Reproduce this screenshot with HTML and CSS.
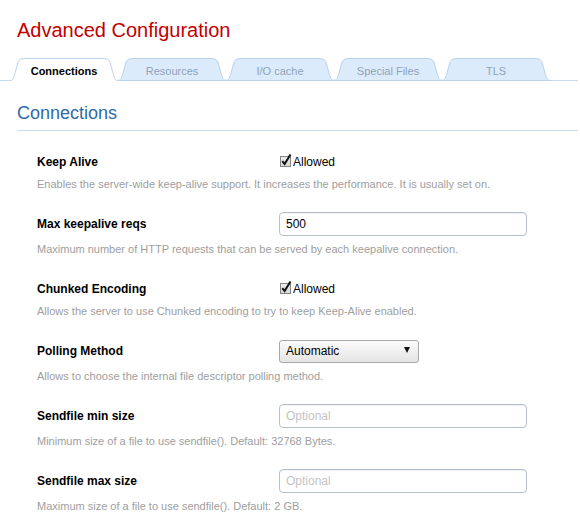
FILE: index.html
```html
<!DOCTYPE html>
<html>
<head>
<meta charset="utf-8">
<link rel="stylesheet" href="styles.css">
</head>
<body>
<h1 class="title">Advanced Configuration</h1>
<div class="tabs">
  <div class="tab active"><svg class="tab-bg" viewBox="0 0 110 23" preserveAspectRatio="none"><path d="M0,23 C4,23 5,19 6,15 L9,4 Q10,0.5 15,0.5 L95,0.5 Q100,0.5 101,4 L104,15 C105,19 106,23 110,23" /></svg><span>Connections</span></div>
  <div class="tab"><svg class="tab-bg" viewBox="0 0 110 23" preserveAspectRatio="none"><path d="M0,22.5 C4,22.5 5,19 6,15 L9,4 Q10,0.5 15,0.5 L95,0.5 Q100,0.5 101,4 L104,15 C105,19 106,22.5 110,22.5 Z" /></svg><span>Resources</span></div>
  <div class="tab"><svg class="tab-bg" viewBox="0 0 110 23" preserveAspectRatio="none"><path d="M0,22.5 C4,22.5 5,19 6,15 L9,4 Q10,0.5 15,0.5 L95,0.5 Q100,0.5 101,4 L104,15 C105,19 106,22.5 110,22.5 Z" /></svg><span>I/O cache</span></div>
  <div class="tab"><svg class="tab-bg" viewBox="0 0 110 23" preserveAspectRatio="none"><path d="M0,22.5 C4,22.5 5,19 6,15 L9,4 Q10,0.5 15,0.5 L95,0.5 Q100,0.5 101,4 L104,15 C105,19 106,22.5 110,22.5 Z" /></svg><span>Special Files</span></div>
  <div class="tab"><svg class="tab-bg" viewBox="0 0 110 23" preserveAspectRatio="none"><path d="M0,22.5 C4,22.5 5,19 6,15 L9,4 Q10,0.5 15,0.5 L95,0.5 Q100,0.5 101,4 L104,15 C105,19 106,22.5 110,22.5 Z" /></svg><span>TLS</span></div>
</div>
<h2 class="section">Connections</h2>
<div class="rows">
  <div class="row check">
    <div class="head"><div class="label">Keep Alive</div><div class="ctl"><svg class="cb" width="13" height="14" viewBox="0 0 13 14"><defs><linearGradient id="g1" x1="0" y1="0" x2="0" y2="1"><stop offset="0" stop-color="#efefef"/><stop offset="1" stop-color="#d6d6d6"/></linearGradient></defs><rect x="0.5" y="3.5" width="10" height="10" fill="url(#g1)" stroke="#858585"/><path d="M2.3,8.2 L4.6,11 L10.5,1.5" fill="none" stroke="#111" stroke-width="2"/></svg><span class="cb-text">Allowed</span></div></div>
    <div class="desc">Enables the server-wide keep-alive support. It increases the performance. It is usually set on.</div>
  </div>
  <div class="row field">
    <div class="head"><div class="label">Max keepalive reqs</div><div class="ctl"><div class="input">500</div></div></div>
    <div class="desc">Maximum number of HTTP requests that can be served by each keepalive connection.</div>
  </div>
  <div class="row check">
    <div class="head"><div class="label">Chunked Encoding</div><div class="ctl"><svg class="cb" width="13" height="14" viewBox="0 0 13 14"><defs><linearGradient id="g2" x1="0" y1="0" x2="0" y2="1"><stop offset="0" stop-color="#efefef"/><stop offset="1" stop-color="#d6d6d6"/></linearGradient></defs><rect x="0.5" y="3.5" width="10" height="10" fill="url(#g2)" stroke="#858585"/><path d="M2.3,8.2 L4.6,11 L10.5,1.5" fill="none" stroke="#111" stroke-width="2"/></svg><span class="cb-text">Allowed</span></div></div>
    <div class="desc">Allows the server to use Chunked encoding to try to keep Keep-Alive enabled.</div>
  </div>
  <div class="row field">
    <div class="head"><div class="label">Polling Method</div><div class="ctl"><div class="select"><span>Automatic</span><svg width="6" height="6" viewBox="0 0 6 6"><path d="M0,0 L6,0 L3,6 Z" fill="#111"/></svg></div></div></div>
    <div class="desc">Allows to choose the internal file descriptor polling method.</div>
  </div>
  <div class="row field">
    <div class="head"><div class="label">Sendfile min size</div><div class="ctl"><div class="input placeholder">Optional</div></div></div>
    <div class="desc">Minimum size of a file to use sendfile(). Default: 32768 Bytes.</div>
  </div>
  <div class="row field">
    <div class="head"><div class="label">Sendfile max size</div><div class="ctl"><div class="input placeholder">Optional</div></div></div>
    <div class="desc">Maximum size of a file to use sendfile(). Default: 2 GB.</div>
  </div>
</div>
</body>
</html>
```
FILE: styles.css
```css
html, body {
  margin: 0;
  padding: 0;
  background: #fff;
}
body {
  width: 578px;
  font-family: "Liberation Sans", Arial, sans-serif;
  color: #000;
}
.title {
  margin: 0;
  padding: 18px 17px 0;
  font-size: 20px;
  line-height: 24px;
  font-weight: normal;
  color: #c30000;
}
.tabs {
  display: flex;
  align-items: flex-start;
  margin-top: 16px;
  padding-left: 9px;
  height: 22px;
  border-bottom: 1px solid #c6daee;
}
.tab {
  position: relative;
  width: 110px;
  height: 23px;
  margin-right: -2px;
  display: flex;
  justify-content: center;
  font-size: 11px;
  line-height: 23px;
  color: #8ea2ba;
}
.tab span {
  position: relative;
  padding-top: 2px;
}
.tab-bg {
  position: absolute;
  left: 0;
  top: 0;
  width: 110px;
  height: 23px;
}
.tab-bg path {
  fill: #dcebfb;
  stroke: #bcd3ea;
  stroke-width: 1;
}
.tab.active {
  z-index: 2;
  color: #000;
  font-weight: bold;
}
.tab.active .tab-bg path {
  fill: #fff;
}
.section {
  margin: 0 0 0 17px;
  padding: 21px 0 6px;
  font-size: 18px;
  line-height: 22px;
  font-weight: normal;
  color: #2f6aa9;
  border-bottom: 1px solid #cbdbeb;
}
.rows {
  padding: 19px 0 0 37px;
}
.row + .row {
  margin-top: 21px;
}
.head {
  display: flex;
  align-items: center;
  height: 24px;
}
.label {
  width: 242px;
  font-size: 12px;
  font-weight: bold;
}
.ctl {
  display: flex;
  align-items: center;
}
.cb {
  display: block;
  margin-left: 1px;
  margin-top: -4px;
}
.cb-text {
  margin-left: 0;
  font-size: 12px;
}
.desc {
  margin-top: 3px;
  font-size: 11px;
  line-height: 14px;
  color: #9e9e9e;
}
.field .desc {
  margin-top: 6px;
}
.input {
  box-sizing: border-box;
  width: 248px;
  height: 24px;
  padding: 0 6px;
  border: 1px solid #b3bfcc;
  border-radius: 4px;
  font-size: 12px;
  line-height: 22px;
  color: #000;
  box-shadow: inset 0 1px 1px rgba(0,0,0,0.06);
}
.input.placeholder {
  color: #c4c4c4;
}
.select {
  box-sizing: border-box;
  width: 140px;
  height: 23px;
  padding: 0 4px 0 6px;
  display: flex;
  align-items: center;
  justify-content: space-between;
  border: 1px solid #a9a9a9;
  border-radius: 3px;
  background: linear-gradient(#fbfbfb, #e4e4e4);
  font-size: 12px;
}
.select svg {
  display: block;
  margin-right: 4px;
  margin-top: -3px;
}
```
